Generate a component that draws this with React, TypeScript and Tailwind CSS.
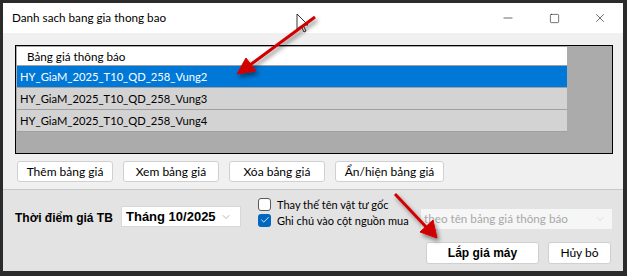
import { ChevronDown, Check, Minus, Square, X } from "lucide-react";

const ui = { fontFamily: 'Lato, "Noto Sans", sans-serif' };
const bold = { fontFamily: '"Liberation Sans", Arial, sans-serif' };

const rows = [
  "HY_GiaM_2025_T10_QD_258_Vung2",
  "HY_GiaM_2025_T10_QD_258_Vung3",
  "HY_GiaM_2025_T10_QD_258_Vung4",
];

const Btn = ({ label, w }: { label: string; w: string }) => (
  <button
    className={`${w} h-[21px] shrink-0 rounded-[3px] border border-[#d0d0d0] bg-white text-[12px] leading-none text-black`}
  >
    {label}
  </button>
);

const Box = ({ checked, label }: { checked?: boolean; label: string }) => (
  <label className="flex h-[14px] items-center gap-[6px] whitespace-nowrap text-[11px] leading-none text-black">
    {checked ? (
      <span className="flex size-[13px] items-center justify-center rounded-[3px] bg-[#0067c0]">
        <Check size={10} strokeWidth={2} className="text-white" />
      </span>
    ) : (
      <span className="size-[13px] rounded-[3px] border border-[#5a5a5a] bg-white" />
    )}
    {label}
  </label>
);

export default function App() {
  return (
    <div className="h-[276px] w-[627px] bg-[#2b2b2b] p-[3px]" style={ui}>
      <div className="relative flex h-[268px] w-[620px] flex-col overflow-hidden bg-[#f0f0f0]">
        {/* title bar */}
        <div className="flex h-[30px] shrink-0 items-center bg-white pl-[9px] text-[11.7px] text-black">
          <span className="flex-1">Danh sach bang gia thong bao</span>
          <div className="flex h-full items-center">
            <span className="flex w-[46px] justify-center">
              <Minus size={14} strokeWidth={1} />
            </span>
            <span className="flex w-[46px] justify-center">
              <Square size={11} strokeWidth={1.2} />
            </span>
            <span className="flex w-[46px] justify-center">
              <X size={14} strokeWidth={1} />
            </span>
          </div>
        </div>

        {/* list area */}
        <div className="shrink-0 px-[12px] pt-[12px]">
          <div className="h-[109px] w-[598px] border border-black bg-[#ababab] pt-px pl-px">
            <div className="h-[19px] w-[550px] border-b border-[#a0a0a0] bg-white pl-[10px] text-[11.7px] leading-[19px] text-black">
              Bảng giá thông báo
            </div>
            {rows.map((r, i) => (
              <div
                key={r}
                className={`h-[22px] w-[550px] border-b border-[#a0a0a0] pl-[3px] text-[11.2px] leading-[21px] ${
                  i === 0 ? "bg-[#0078d7] text-white" : "bg-[#d3d3d3] text-black"
                }`}
              >
                {r}
              </div>
            ))}
          </div>
          <div className="flex gap-[10px] pl-[2px] pt-[7px]">
            <Btn label="Thêm bảng giá" w="w-[96px]" />
            <Btn label="Xem bảng giá" w="w-[96px]" />
            <Btn label="Xóa bảng giá" w="w-[96px]" />
            <Btn label="Ẩn/hiện bảng giá" w="w-[109px]" />
          </div>
        </div>

        {/* bottom panel */}
        <div className="mt-[7px] flex-1 border-t border-[#c8c8c8] bg-[#e3e3e3] pl-[12px] pr-[11px]">
          <div className="flex h-[43px] items-start pt-[6px]">
            <span
              className="mt-[13px] w-[106px] shrink-0 whitespace-nowrap text-[12px] font-bold text-black"
              style={bold}
            >
              Thời điểm giá TB
            </span>
            <div
              className="mt-[10px] flex h-[21px] w-[120px] shrink-0 items-center justify-between whitespace-nowrap border border-[#d8d8d8] bg-white pl-[4px] pr-[8px] text-[13px] font-bold text-black"
              style={bold}
            >
              Tháng 10/2025
              <ChevronDown size={12} strokeWidth={1} className="text-[#707070]" />
            </div>
            <div className="ml-[17px] flex shrink-0 flex-col gap-[2px] pt-px">
              <Box label="Thay thế tên vật tư gốc" />
              <Box checked label="Ghi chú vào cột nguồn mua" />
            </div>
            <div className="ml-auto mt-[13px] flex h-[20px] w-[191px] shrink-0 items-center justify-between whitespace-nowrap bg-[#f6f6f6] pl-[3px] pr-[6px] text-[11.7px] text-[#a8a8a8]">
              theo tên bảng giá thông báo
              <ChevronDown size={12} strokeWidth={1} className="text-[#c0c0c0]" />
            </div>
          </div>
          <div className="mt-[9px] flex justify-end gap-[9px] pr-px">
            <button
              className="h-[22px] w-[113px] rounded-[3px] border border-[#d0d0d0] bg-white text-[12px] font-bold text-black"
              style={bold}
            >
              Lắp giá máy
            </button>
            <button className="h-[22px] w-[63px] rounded-[3px] border border-[#d0d0d0] bg-white text-[12px] text-black">
              Hủy bỏ
            </button>
          </div>
        </div>

        {/* annotation arrows + cursor overlay */}
        <svg className="pointer-events-none absolute left-[-3px] top-[-3px]" width="627" height="276">
          <defs>
            <filter id="sh" x="-20%" y="-20%" width="140%" height="140%">
              <feDropShadow dx="2" dy="3" stdDeviation="2" floodColor="#000" floodOpacity="0.45" />
            </filter>
          </defs>
          <path d="M297 14 L297 29 L301 26 L304 32 L306 31 L303 25 L308 25 Z" fill="white" stroke="black" strokeWidth="0.8" />
          <g filter="url(#sh)" fill="#d10000" stroke="#d10000">
            <line x1="315" y1="17" x2="250" y2="65" strokeWidth="3" />
            <path d="M237 74 L246 58 L256 71 Z" strokeWidth="1" />
            <line x1="395" y1="194" x2="428" y2="229" strokeWidth="3" />
            <path d="M437 238 L420 232 L433 220 Z" strokeWidth="1" />
          </g>
        </svg>
      </div>
    </div>
  );
}
